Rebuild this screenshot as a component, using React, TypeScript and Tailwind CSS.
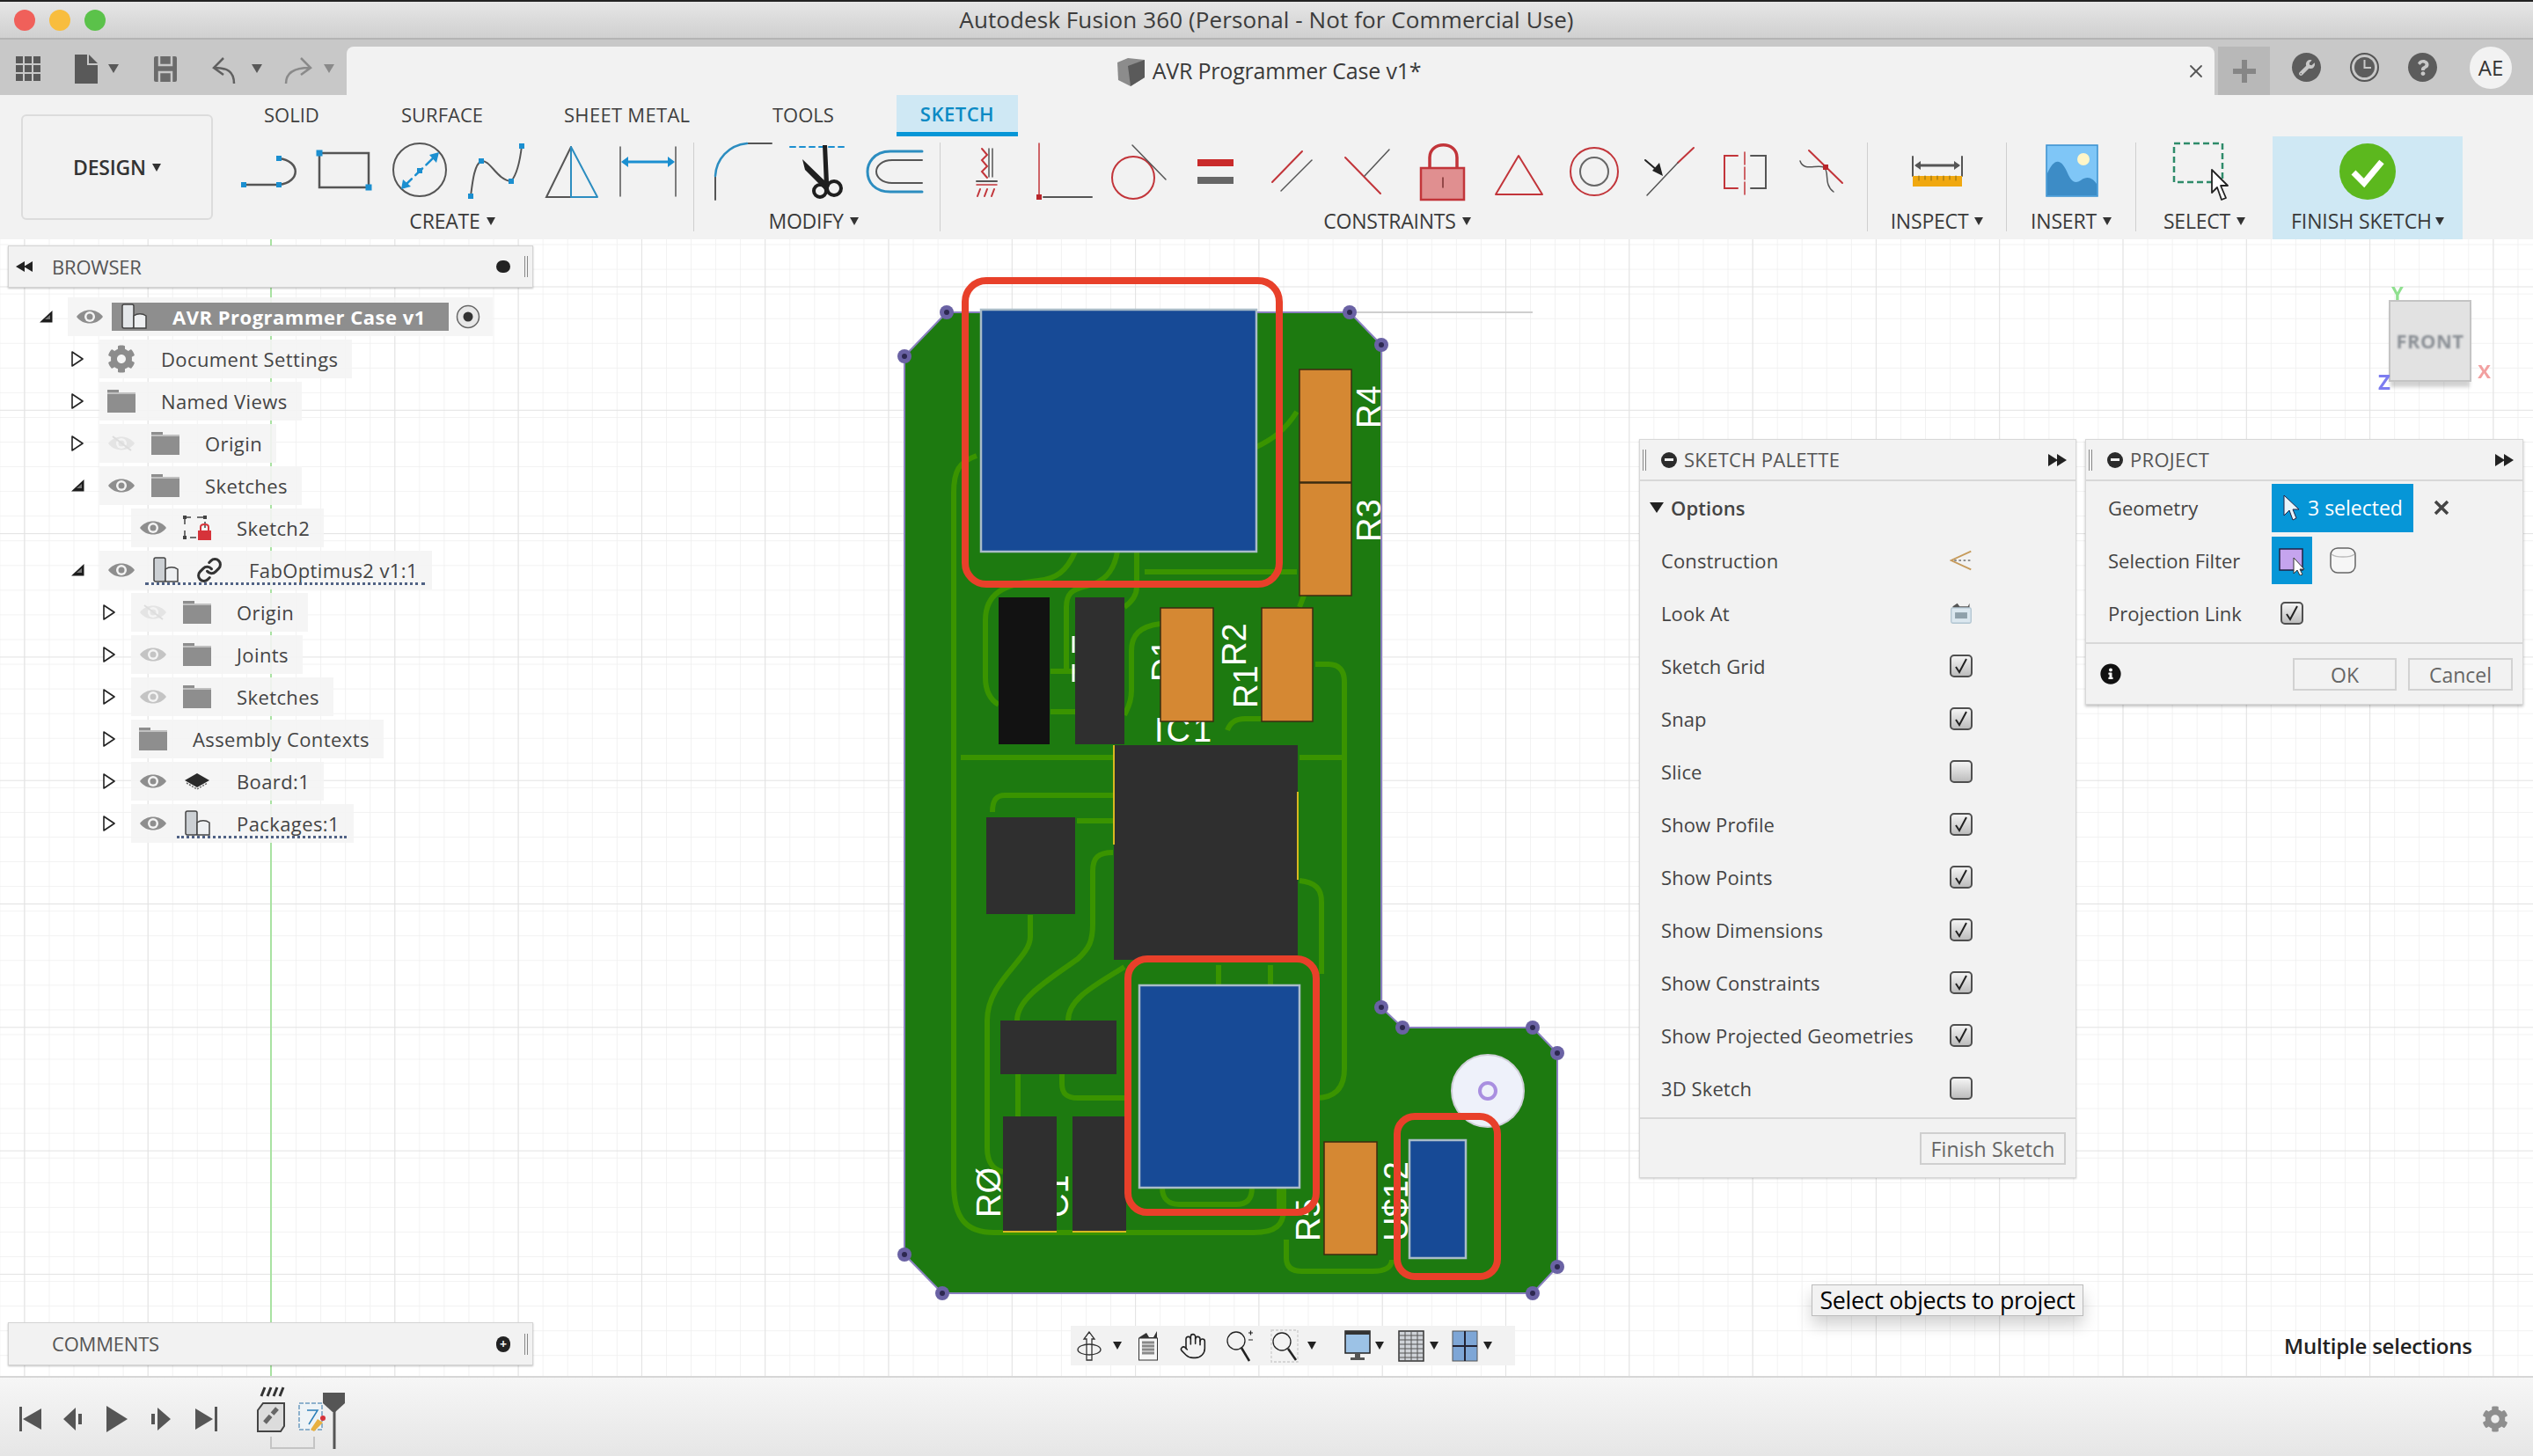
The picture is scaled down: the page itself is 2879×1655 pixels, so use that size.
import type { ReactNode } from 'react';
import { FaCog, FaInfoCircle, FaQuestion, FaWrench } from 'react-icons/fa';
import { Hand, Link, X } from 'lucide-react';

const INK = '#555555';
const BLUE = '#1b8fd0';
const RED = '#c2353a';

function Caret({ className = 'ml-[7px]', color = 'border-t-[#333333]' }: { className?: string; color?: string }) {
  return <span className={`inline-block h-0 w-0 border-x-[5px] border-t-[9px] border-x-transparent ${color} ${className}`} />;
}

function Cell({ w = 87, children }: { w?: number; children: ReactNode }) {
  return (
    <svg width={w} height={82} viewBox={`0 0 ${w} 82`} fill="none" strokeLinecap="round">
      {children}
    </svg>
  );
}

function Dot({ x, y, s = 8, c = BLUE }: { x: number; y: number; s?: number; c?: string }) {
  return <rect x={x - s / 2} y={y - s / 2} width={s} height={s} fill={c} />;
}

function Group({ label, width, shift = '', children }: { label: string; width: string; shift?: string; children: ReactNode }) {
  return (
    <div className={`flex flex-col items-center pt-[2px] ${width}`}>
      <div className="flex h-[82px]">{children}</div>
      <div className={`flex h-[24px] items-center text-[23px] tracking-[-0.2px] text-[#3a3a3a] ${shift}`}>
        {label}
        <Caret />
      </div>
    </div>
  );
}

function Divider({ className }: { className: string }) {
  return <div className={`mt-[7px] h-[101px] w-px bg-[#cfcfcf] ${className}`} />;
}

const createIcons = [
  <>
    <path d="M15 53H55M55 23C80 26 80 50 55 53" stroke={INK} strokeWidth="2.5" />
    <Dot x={15} y={53} s={6} /><Dot x={55} y={53} s={6} /><Dot x={55} y={23} s={6} />
  </>,
  <>
    <rect x="14" y="17" width="56" height="39" stroke={INK} strokeWidth="2.5" />
    <Dot x={14} y={17} s={7} /><Dot x={70} y={56} s={7} />
  </>,
  <>
    <circle cx="41" cy="36" r="30" stroke={INK} strokeWidth="2" />
    <path d="M24 54L59 20" stroke={BLUE} strokeWidth="2.5" strokeDasharray="11 6" />
    <Dot x={41} y={37} s={6} />
    <path d="M20 58L22 47L31 55ZM63 16L52 19L60 28Z" fill={BLUE} />
  </>,
  <>
    <path d="M12 66C14 50 16 30 24 26C34 24 42 48 58 49C64 42 68 26 70 9" stroke={INK} strokeWidth="2" />
    <Dot x={12} y={66} s={6} /><Dot x={24} y={26} s={6} /><Dot x={58} y={49} s={6} /><Dot x={70} y={9} s={6} />
  </>,
  <>
    <path d="M39 10L11 67H39" stroke={INK} strokeWidth="2" />
    <path d="M39 10V67H69Z" stroke="#2c8dc0" strokeWidth="2" strokeLinejoin="round" />
  </>,
  <>
    <path d="M8 10V66M71 10V66" stroke={INK} strokeWidth="1.5" />
    <path d="M12 27H67" stroke={BLUE} strokeWidth="3" />
    <path d="M9 27L17 21V33ZM70 27L62 21V33Z" fill={BLUE} />
  </>,
];

const modifyIcons = [
  <>
    <path d="M15 44V70M51 6H79" stroke={INK} strokeWidth="2" />
    <path d="M15 43C16 24 30 8 51 6" stroke="#2c8dc0" strokeWidth="2.5" />
  </>,
  <>
    <path d="M13 10H76" stroke={BLUE} strokeWidth="2" strokeDasharray="6 5" />
    <path d="M50 8L55 8L57 50L52 56ZM27 24L58 54L54 60L30 36Z" fill="#1f1f1f" />
    <circle cx="47" cy="60" r="7" stroke="#1f1f1f" strokeWidth="4" />
    <circle cx="63" cy="57" r="8" stroke="#1f1f1f" strokeWidth="4" />
  </>,
  <>
    <path d="M76 15H40C20 15 14 30 14 38C14 50 22 61 40 61H76" stroke="#2c8dc0" strokeWidth="3" />
    <path d="M76 25H42C30 25 24 32 24 38C24 44 30 51 42 51H76" stroke={INK} strokeWidth="2" />
  </>,
];

const constraintIcons = [
  <>
    <path d="M44 12V44M48 12V44" stroke={INK} strokeWidth="1.5" />
    <path d="M36 12L42 19L36 25L42 32L36 38L42 45" stroke={RED} strokeWidth="2" />
    <path d="M30 49H53" stroke={INK} strokeWidth="2" />
    <path d="M30 53H53" stroke={RED} strokeWidth="1.5" />
    <path d="M34 58L31 66M42 58L39 66M50 58L47 66" stroke={RED} strokeWidth="2" />
  </>,
  <>
    <path d="M15 6V66" stroke={RED} strokeWidth="1.5" />
    <path d="M20 67H75" stroke={INK} strokeWidth="2" />
    <Dot x={15} y={67} s={6} c="#b8262b" />
  </>,
  <>
    <circle cx="36" cy="45" r="24" stroke={RED} strokeWidth="2" />
    <path d="M35 8L73 47" stroke={INK} strokeWidth="1.5" />
  </>,
  <>
    <rect x="23" y="24" width="41" height="8" fill="#c92a2a" />
    <rect x="23" y="44" width="41" height="8" fill="#666666" />
  </>,
  <>
    <path d="M56 15L22 50" stroke={RED} strokeWidth="2" />
    <path d="M67 25L32 60" stroke={INK} strokeWidth="1.5" />
  </>,
  <>
    <path d="M19 22L59 63" stroke={RED} strokeWidth="2" />
    <path d="M69 13L41 43" stroke={INK} strokeWidth="1.5" />
  </>,
  <>
    <path d="M29 34V22C29 3 60 3 60 22V34" stroke="#c2353a" strokeWidth="3.5" />
    <rect x="19" y="34" width="49" height="36" fill="#e08f90" stroke="#c2353a" strokeWidth="2.5" />
    <path d="M44 45V56" stroke="#7a3030" strokeWidth="1.5" />
  </>,
  <path d="M44 20L18 64H71Z" stroke={RED} strokeWidth="2" strokeLinejoin="round" />,
  <>
    <circle cx="44" cy="38" r="27" stroke={RED} strokeWidth="2" />
    <circle cx="44" cy="38" r="16" stroke="#666666" strokeWidth="2" />
  </>,
  <>
    <path d="M71 11L53 28" stroke={RED} strokeWidth="2" />
    <path d="M53 28L18 65" stroke={INK} strokeWidth="1.5" />
    <path d="M16 25L30 37" stroke="#222222" strokeWidth="2" />
    <path d="M36 43L24 37L32 28Z" fill="#222222" />
  </>,
  <>
    <path d="M43 16V66" stroke={RED} strokeWidth="1.5" strokeDasharray="14 3" />
    <path d="M35 20H20V57H35" stroke={RED} strokeWidth="2" />
    <path d="M50 20H67V57H50" stroke={INK} strokeWidth="2" />
  </>,
  <>
    <path d="M30 14L68 51" stroke={RED} strokeWidth="2" />
    <path d="M20 26C24 38 38 30 47 33C54 38 46 52 58 61" stroke={INK} strokeWidth="1.5" />
    <Dot x={49} y={33} s={6} c="#b8262b" />
  </>,
];

function Toolbar() {
  return (
    <div className="flex h-[164px] bg-[#f2f2f2]">
      <div className="ml-[24px] mt-[22px] flex h-[120px] w-[218px] items-center justify-center rounded-[6px] border-2 border-[#dcdcdc] text-[23px] font-semibold tracking-[-0.2px] text-[#333333]">
        DESIGN
        <Caret />
      </div>
      <div className="ml-[20px] flex flex-1 flex-col">
        <div className="relative flex h-[47px] items-center text-[22px] text-[#3f3f3f]">
          <span className="absolute left-[38px] top-[6px]">SOLID</span>
          <span className="absolute left-[194px] top-[6px]">SURFACE</span>
          <span className="absolute left-[379px] top-[6px] tracking-[0.3px]">SHEET METAL</span>
          <span className="absolute left-[616px] top-[6px]">TOOLS</span>
          <span className="absolute left-[757px] top-0 flex h-[47px] w-[138px] items-center justify-center border-b-[5px] border-[#0696d7] bg-[#cfe8f4] font-semibold tracking-[0.5px] text-[#0b8ac4]">
            SKETCH
          </span>
        </div>
        <div className="flex flex-1">
          <Group label="CREATE" width="w-[522px]" shift="mr-[18px]">
            {createIcons.map((icon, i) => <Cell key={i}>{icon}</Cell>)}
          </Group>
          <Divider className="ml-[4px]" />
          <Group label="MODIFY" width="ml-[9px] w-[261px]" shift="mr-[8px]">
            {modifyIcons.map((icon, i) => <Cell key={i}>{icon}</Cell>)}
          </Group>
          <Divider className="ml-[9px]" />
          <Group label="CONSTRAINTS" width="ml-[11px] w-[1032px]" shift="mr-[16px]">
            {constraintIcons.map((icon, i) => <Cell key={i} w={86}>{icon}</Cell>)}
          </Group>
          <Divider className="ml-[10px]" />
          <Group label="INSPECT" width="w-[157px]">
            <Cell w={157}>
              <path d="M51 21V43M107 21V43" stroke={INK} strokeWidth="2" />
              <path d="M56 31H102" stroke={INK} strokeWidth="3" />
              <path d="M53 31L60 26V36ZM105 31L98 26V36Z" fill={INK} />
              <rect x="51" y="43" width="56" height="12" fill="#f0a810" />
              <path d="M58 43V48M65 43V47M72 43V48M79 43V47M86 43V48M93 43V47M100 43V48" stroke="#8a6a10" strokeWidth="1" />
            </Cell>
          </Group>
          <Divider className="" />
          <Group label="INSERT" width="w-[146px]">
            <Cell w={146}>
              <rect x="45" y="8" width="58" height="58" fill="#7fc6f7" stroke="#3a90d0" strokeWidth="1.5" />
              <path d="M46 65V40C54 22 62 22 70 42C74 50 78 52 84 48C92 42 98 46 102 52V65Z" fill="#3d8cc6" />
              <ellipse cx="87" cy="24" rx="7" ry="7" fill="#fff6c8" />
            </Cell>
          </Group>
          <Divider className="" />
          <Group label="SELECT" width="w-[155px]">
            <Cell w={155}>
              <rect x="43" y="6" width="55" height="44" stroke="#2e8b6a" strokeWidth="2.5" strokeDasharray="7 4" strokeLinecap="butt" />
              <path d="M86 36V62L92 56L97 70L102 68L96 54H104Z" fill="#ffffff" stroke="#222222" strokeWidth="1.8" strokeLinejoin="round" />
            </Cell>
          </Group>
          <div className="flex w-[216px] flex-col items-center bg-[#cfe8f4] pt-[2px]">
            <div className="flex h-[82px] items-start">
              <svg width="66" height="66" viewBox="0 0 66 66" className="mt-[5px]">
                <circle cx="33" cy="33" r="32" fill="#5cb81e" />
                <path d="M17 34L29 46L49 22" stroke="#ffffff" strokeWidth="7" fill="none" />
              </svg>
            </div>
            <div className="flex h-[24px] items-center text-[23px] tracking-[-0.1px] text-[#3a3a3a]">
              FINISH SKETCH
              <Caret className="ml-[4px]" />
            </div>
          </div>
        </div>
      </div>
    </div>
  );
}

function TitleBar() {
  return (
    <div className="relative flex h-[45px] items-center justify-center border-t-2 border-b-2 border-t-[#222222] border-b-[#b4b4b4] bg-gradient-to-b from-[#e6e6e6] to-[#d0d0d0] text-[26px] tracking-[0.1px] text-[#3c3c3c]">
      <div className="absolute left-[16px] flex gap-[16px]">
        <span className="size-[24px] rounded-full bg-[#f0605a]" />
        <span className="size-[24px] rounded-full bg-[#f8bd3e]" />
        <span className="size-[24px] rounded-full bg-[#5bc24a]" />
      </div>
      Autodesk Fusion 360 (Personal - Not for Commercial Use)
    </div>
  );
}

function TabRow() {
  return (
    <div className="flex h-[63px] bg-[#c8c8c8]">
      <div className="flex w-[394px] items-start pt-[16px]">
        <svg width="394" height="36" viewBox="0 0 394 36" fill="none">
          <g fill="#595959">
            {[0, 10, 20].map((x) =>
              [0, 10, 20].map((y) => <rect key={`${x}-${y}`} x={18 + x} y={3 + y} width="8" height="8" />)
            )}
          </g>
          <path d="M85 1H101L111 11V34H85Z" fill="#595959" />
          <path d="M100 1V12H111" stroke="#c8c8c8" strokeWidth="2" />
          <path d="M123 12H135L129 22Z" fill="#595959" />
          <rect x="175" y="3" width="26" height="29" rx="2" fill="#6b6b6b" />
          <path d="M181 3V13H195V3" stroke="#c8c8c8" strokeWidth="2.5" />
          <path d="M181 32V21H195V32" stroke="#c8c8c8" strokeWidth="2.5" />
          <path d="M254 5L243 16L254 24M244 16C258 16 266 20 266 34" stroke="#606060" strokeWidth="2.5" />
          <path d="M286 12H298L292 22Z" fill="#595959" />
          <path d="M342 5L353 16L342 24M352 16C338 16 325 20 325 34" stroke="#8a8a8a" strokeWidth="2.5" />
          <path d="M368 12H380L374 22Z" fill="#8a8a8a" />
        </svg>
      </div>
      <div className="mt-[8px] flex w-[2123px] items-center justify-center rounded-t-[8px] bg-[#f2f2f2] pr-[28px]">
        <svg width="34" height="34" viewBox="0 0 34 34" className="mr-[8px]">
          <path d="M2 7L14 2L33 4V24L17 34L3 27Z" fill="#8c8c8c" />
          <path d="M14 11L33 4V24L17 34Z" fill="#5a5a5a" />
        </svg>
        <span className="text-[25px] tracking-[-0.2px] text-[#3a3a3a]">AVR Programmer Case v1*</span>
        <X className="absolute left-[2484px] top-[69px] text-[#555555]" size={24} strokeWidth={1.8} />
      </div>
      <div className="ml-[4px] mt-[8px] flex h-[55px] w-[59px] items-center justify-center bg-[#b8b8b8]">
        <svg width="26" height="26" viewBox="0 0 26 26"><path d="M10 0H16V10H26V16H16V26H10V16H0V10H10Z" fill="#868686" /></svg>
      </div>
      <div className="flex h-[63px] flex-1 items-center pl-[25px]">
        <span className="flex size-[33px] items-center justify-center rounded-full bg-[#5c5c5c] text-[#c8c8c8]"><FaWrench size={18} /></span>
        <svg width="33" height="33" viewBox="0 0 33 33" className="ml-[33px]">
          <circle cx="16.5" cy="16.5" r="15.5" fill="none" stroke="#555555" strokeWidth="2" />
          <circle cx="16.5" cy="16.5" r="11.5" fill="#5c5c5c" />
          <path d="M16.5 8V17H24" stroke="#c8c8c8" strokeWidth="2" fill="none" />
        </svg>
        <span className="ml-[33px] flex size-[33px] items-center justify-center rounded-full bg-[#5c5c5c] text-[#c8c8c8]"><FaQuestion size={18} /></span>
        <span className="ml-[37px] flex size-[48px] items-center justify-center rounded-full bg-[#f2f2f2] text-[24px] text-[#333333]">AE</span>
      </div>
    </div>
  );
}

function CanvasDrawing() {
  const traces = [
    'M1110 518C1090 525 1084 535 1084 560V1345C1084 1385 1098 1401 1130 1401H1425C1450 1401 1459 1392 1459 1375V1350',
    'M1222 627C1212 650 1200 658 1180 660C1140 664 1120 675 1120 705V770C1120 785 1125 795 1135 801',
    'M1270 627C1266 650 1255 662 1235 666C1218 670 1212 675 1212 690V763M1194 763H1222M1194 809H1224',
    'M1292 627V667C1292 678 1285 685 1278 690M1301 650H1474M1474 468C1460 490 1445 500 1428 508',
    'M1319 709C1295 712 1286 722 1286 740V785C1286 800 1280 808 1278 813M1395 830C1398 822 1403 817 1415 817H1434',
    'M1495 755H1510C1522 755 1528 762 1528 775V1215C1528 1238 1516 1248 1496 1248',
    'M1092 861H1265M1477 861H1528M1128 923C1128 910 1132 904 1142 904H1265M1224 933H1265',
    'M1265 969C1248 969 1242 975 1242 990V1050C1242 1070 1238 1078 1225 1090C1190 1115 1156 1135 1156 1160',
    'M1171 1040V1065C1171 1090 1122 1115 1122 1160V1305C1122 1322 1130 1330 1140 1332',
    'M1278 1099C1245 1120 1214 1135 1214 1160M1477 1001C1495 1003 1502 1010 1502 1025V1107',
    'M1385 1097V1120M1444 1097V1120M1207 1221V1232C1207 1243 1212 1248 1225 1248H1286M1157 1221V1269',
    'M1321 1350C1321 1362 1328 1369 1340 1369H1405C1418 1369 1423 1362 1423 1350M1454 1350V1382',
    'M1462 1409V1430C1462 1440 1468 1445 1480 1445H1560C1575 1445 1582 1440 1582 1432M1482 677L1477 690',
  ];
  const vertices = [
    [1076, 355], [1028, 405], [1534, 355], [1570, 392], [1570, 1145], [1594, 1168],
    [1742, 1168], [1770, 1197], [1770, 1440], [1742, 1470], [1071, 1470], [1028, 1426],
  ];
  const rotated = [
    { t: 'R4', x: 1569, y: 487, s: 38 },
    { t: 'R3', x: 1569, y: 616, s: 38 },
    { t: 'R2', x: 1416, y: 757, s: 38 },
    { t: 'R1', x: 1429, y: 805, s: 38 },
    { t: 'D1', x: 1336, y: 775, s: 38 },
    { t: 'RØ', x: 1137, y: 1384, s: 38 },
    { t: 'C1', x: 1214, y: 1384, s: 38 },
    { t: 'R5', x: 1500, y: 1411, s: 38 },
    { t: 'U$12', x: 1600, y: 1411, s: 38 },
  ];
  const orange = [
    [1477, 420, 59, 128], [1477, 549, 59, 128], [1319, 691, 60, 129], [1434, 691, 58, 129], [1505, 1298, 60, 128],
  ];
  const dark = [
    [1222, 679, 56, 167, '#2f2f2f'], [1135, 679, 58, 167, '#121212'], [1266, 847, 209, 244, '#2f2f2f'],
    [1121, 929, 101, 110, '#2f2f2f'], [1137, 1160, 132, 61, '#2f2f2f'], [1140, 1269, 61, 130, '#2f2f2f'], [1219, 1269, 61, 130, '#2f2f2f'],
  ] as const;
  const blue = [[1115, 352, 313, 275], [1295, 1120, 182, 230], [1602, 1296, 64, 134]];

  return (
    <svg className="absolute inset-0 bg-white" width="2879" height="1292" viewBox="0 272 2879 1292" fill="none">
      <defs>
        <pattern id="minor" x="308" y="25" width="28.06" height="28.06" patternUnits="userSpaceOnUse">
          <path d="M0 0V28.06M0 0H28.06" stroke="#eeeeee" strokeWidth="1.5" />
        </pattern>
        <pattern id="major" x="308" y="325.5" width="140.3" height="140.3" patternUnits="userSpaceOnUse">
          <path d="M0 0V140.3M0 0H140.3" stroke="#e2e2e2" strokeWidth="2" />
        </pattern>
      </defs>
      <rect x="0" y="272" width="2879" height="1292" fill="url(#minor)" />
      <rect x="0" y="272" width="2879" height="1292" fill="url(#major)" />
      <path d="M308 272V1564" stroke="#a9e2a2" strokeWidth="2" />
      <path d="M1534 355H1742" stroke="#cfcfcf" strokeWidth="2" />

      <path
        d="M1076 355H1534L1570 392V1145L1594 1168H1742L1770 1197V1440L1742 1470H1071L1028 1426V405Z"
        fill="#1d7a10"
        stroke="#8a80c0"
        strokeWidth="2"
      />
      {traces.map((d, i) => (
        <path key={i} d={d} stroke="#3a9400" strokeWidth="6" />
      ))}
      {vertices.map(([x, y]) => (
        <g key={`${x}-${y}`}>
          <circle cx={x} cy={y} r="8" fill="#6a62a4" />
          <circle cx={x} cy={y} r="3" fill="#2d2850" />
        </g>
      ))}
      <circle cx="1691" cy="1240" r="41" fill="#eef1fa" stroke="#cfcfd8" strokeWidth="2" />
      <circle cx="1691" cy="1240" r="9" stroke="#a98fe0" strokeWidth="4" />

      {rotated.map((l) => (
        <text
          key={l.t}
          transform={`translate(${l.x} ${l.y}) rotate(-90)`}
          fontFamily="Liberation Sans, sans-serif"
          fontSize={l.s}
          fill="#ffffff"
        >
          {l.t}
        </text>
      ))}
      <text x="1312" y="843" fontFamily="Liberation Sans, sans-serif" fontSize="38" letterSpacing="3" fill="#ffffff">IC1</text>
      <path d="M1220 723V742M1220 755V775" stroke="#ffffff" strokeWidth="3" />

      {orange.map(([x, y, w, h]) => (
        <rect key={`${x}-${y}`} x={x} y={y} width={w} height={h} fill="#d58833" stroke="#3d2a10" strokeWidth="1.5" />
      ))}
      {dark.map(([x, y, w, h, c]) => (
        <rect key={`${x}-${y}`} x={x} y={y} width={w} height={h} fill={c} />
      ))}
      <path d="M1140 1400H1201M1219 1400H1280M1266 960V847M1475 900V1000" stroke="#d8b820" strokeWidth="2" />
      {blue.map(([x, y, w, h]) => (
        <rect key={`${x}-${y}`} x={x} y={y} width={w} height={h} fill="#174a96" stroke="#a9bcc8" strokeWidth="2.5" />
      ))}

      <rect x="1097" y="319" width="357" height="345" rx="24" stroke="#e8402a" strokeWidth="8" />
      <rect x="1282" y="1090" width="214" height="288" rx="22" stroke="#e8402a" strokeWidth="8" />
      <rect x="1588" y="1269" width="114" height="182" rx="20" stroke="#e8402a" strokeWidth="8" />
    </svg>
  );
}

function Eye({ mode = 'on' }: { mode?: 'on' | 'dim' | 'off' }) {
  const color = mode === 'on' ? '#8e8e8e' : mode === 'dim' ? '#c4c4c4' : '#e4e4e4';
  return (
    <svg width="32" height="20" viewBox="0 0 32 20" fill="none">
      <path d="M1 10C8 0 24 0 31 10C24 20 8 20 1 10Z" fill={color} />
      <circle cx="16" cy="10" r="6" fill="#f4f4f4" />
      <circle cx="16" cy="10" r="3.5" fill={color} />
      {mode === 'off' && <path d="M6 2L27 18" stroke="#dddddd" strokeWidth="2" />}
    </svg>
  );
}

function Folder() {
  return (
    <svg width="32" height="26" viewBox="0 0 32 26">
      <path d="M0 0H13V3H32V26H0Z" fill="#8e8e8e" />
      <path d="M0 4H32" stroke="#f2f2f2" strokeWidth="1" />
    </svg>
  );
}

function Component({ light = true }: { light?: boolean }) {
  return (
    <svg width="32" height="30" viewBox="0 0 32 30" fill="none">
      <rect x="3" y="1" width="13" height="27" rx="2" fill={light ? '#e4e7ea' : '#ccd0d4'} stroke="#444444" strokeWidth="1.5" />
      <path d="M16 14C20 11 26 11 30 14V28H16Z" fill="#eef0f2" stroke="#444444" strokeWidth="1.5" />
    </svg>
  );
}

function Chevron({ open }: { open?: boolean }) {
  if (open) {
    return (
      <svg width="15" height="14" viewBox="0 0 15 14">
        <path d="M0 13.5L14.5 0V13.5Z" fill="#1c1c1c" />
        <path d="M6 10L12 5V10Z" fill="#777777" />
      </svg>
    );
  }
  return (
    <svg width="14" height="18" viewBox="0 0 14 18" fill="none">
      <path d="M1 1L13 9L1 17Z" fill="#ffffff" stroke="#222222" strokeWidth="1.6" strokeLinejoin="round" />
    </svg>
  );
}

function IconSlot({ children }: { children?: ReactNode }) {
  return <span className="flex w-[50px] shrink-0 items-center justify-center">{children}</span>;
}

function Wavy({ className }: { className: string }) {
  return <span className={`absolute bottom-[5px] h-[4px] border-b-[3px] border-dotted border-[#4f6184] ${className}`} />;
}

type TreeRowProps = {
  pad: string;
  open?: boolean;
  chevron?: boolean;
  icons: ReactNode[];
  label: string;
  wavy?: string;
};

function TreeRow({ pad, open, chevron = true, icons, label, wavy }: TreeRowProps) {
  return (
    <div className={`flex h-[48px] items-center ${pad}`}>
      <IconSlot>{chevron && <Chevron open={open} />}</IconSlot>
      <div className="relative flex h-[44px] items-center bg-[#f4f4f4]/90 pr-[16px]">
        {icons.map((icon, i) => (
          <IconSlot key={i}>{icon}</IconSlot>
        ))}
        <span className="ml-[20px] text-[22px] tracking-[0.4px] text-[#444444]">{label}</span>
        {wavy && <Wavy className={wavy} />}
      </div>
    </div>
  );
}

function BrowserPanel() {
  return (
    <div className="absolute left-[9px] top-[7px] w-[597px]">
      <div className="flex h-[48px] items-center border border-[#d4d4d4] bg-[#f2f2f2] pl-[8px] pr-[5px] shadow-[0_1px_2px_rgba(0,0,0,0.25)]">
        <svg width="20" height="12" viewBox="0 0 20 12"><path d="M0 6L10 0V12ZM9 6L19 0V12Z" fill="#222222" /></svg>
        <span className="ml-[21px] text-[22px] tracking-[-0.2px] text-[#555555]">BROWSER</span>
        <span className="ml-auto mr-[16px] h-[14px] w-[16px] rounded-full bg-[#222222]" />
        <span className="h-[24px] w-[4px] border-x border-[#888888]" />
      </div>
      <div className="mt-[9px]">
        <div className="flex h-[48px] items-center pl-[18px]">
          <IconSlot><Chevron open /></IconSlot>
          <div className="flex h-[44px] w-[483px] items-center bg-[#f4f4f4]/90">
            <IconSlot><Eye /></IconSlot>
            <div className="flex h-[32px] w-[383px] items-center bg-[#8e8e8e]">
              <span className="flex w-[50px] justify-center"><Component /></span>
              <span className="ml-[19px] text-[22px] font-bold tracking-[0.5px] text-white">AVR Programmer Case v1</span>
            </div>
            <svg width="28" height="28" viewBox="0 0 28 28" className="ml-[8px]">
              <circle cx="14" cy="14" r="12.5" fill="#e8e8e8" stroke="#666666" strokeWidth="1.5" />
              <circle cx="14" cy="14" r="5.5" fill="#333333" />
            </svg>
          </div>
        </div>
        <TreeRow pad="pl-[54px]" icons={[<FaCog size={32} color="#8c8c8c" />]} label="Document Settings" />
        <TreeRow pad="pl-[54px]" icons={[<Folder />]} label="Named Views" />
        <TreeRow pad="pl-[54px]" icons={[<Eye mode="off" />, <Folder />]} label="Origin" />
        <TreeRow pad="pl-[54px]" open icons={[<Eye />, <Folder />]} label="Sketches" />
        <TreeRow
          pad="pl-[90px]"
          chevron={false}
          icons={[
            <Eye />,
            <svg width="34" height="30" viewBox="0 0 34 30" fill="none">
              <path d="M3 3H26V26H3Z" stroke="#444444" strokeWidth="1.5" strokeDasharray="7 7" />
              <path d="M1 1H5V5H1ZM24 1H28V5H24ZM1 24H5V28H1Z" fill="#444444" />
              <rect x="18" y="18" width="15" height="11" fill="#d6333a" />
              <path d="M21 18V14C21 10 30 10 30 14V18" stroke="#d6333a" strokeWidth="2" />
            </svg>,
          ]}
          label="Sketch2"
        />
        <TreeRow
          pad="pl-[54px]"
          open
          icons={[<Eye />, <Component light={false} />, <Link size={30} strokeWidth={2.4} color="#333333" />]}
          label="FabOptimus2 v1:1"
          wavy="left-[52px] right-[8px]"
        />
        <TreeRow pad="pl-[90px]" icons={[<Eye mode="off" />, <Folder />]} label="Origin" />
        <TreeRow pad="pl-[90px]" icons={[<Eye mode="dim" />, <Folder />]} label="Joints" />
        <TreeRow pad="pl-[90px]" icons={[<Eye mode="dim" />, <Folder />]} label="Sketches" />
        <TreeRow pad="pl-[90px]" icons={[<Folder />]} label="Assembly Contexts" />
        <TreeRow
          pad="pl-[90px]"
          icons={[
            <Eye />,
            <svg width="30" height="20" viewBox="0 0 30 20">
              <path d="M15 1L29 9L15 17L1 9Z" fill="#2a2a2a" />
              <path d="M3 12L15 19L27 12" stroke="#666666" strokeWidth="1.5" fill="none" strokeDasharray="2 1.5" />
            </svg>,
          ]}
          label="Board:1"
        />
        <TreeRow pad="pl-[90px]" icons={[<Eye />, <Component light={false} />]} label="Packages:1" wavy="left-[52px] right-[8px]" />
      </div>
    </div>
  );
}

function Check({ on }: { on: boolean }) {
  return (
    <span className="flex size-[26px] items-center justify-center rounded-[5px] border-2 border-[#4f4f4f] bg-gradient-to-b from-[#f4f4f4] to-[#bdbdbd]">
      {on && (
        <svg width="16" height="18" viewBox="0 0 16 18" fill="none">
          <path d="M2 10L6 16L14 1" stroke="#222222" strokeWidth="2" />
        </svg>
      )}
    </span>
  );
}

function PanelHeader({ title }: { title: string }) {
  return (
    <div className="flex h-[47px] items-center border-b-2 border-[#d8d8d8] pl-[3px] pr-[9px]">
      <span className="h-[24px] w-[4px] border-x border-[#888888]" />
      <span className="ml-[17px] flex size-[18px] items-center justify-center rounded-full bg-[#2b2b2b]">
        <span className="h-[3px] w-[10px] bg-[#f2f2f2]" />
      </span>
      <span className="ml-[8px] text-[22px] tracking-[0.3px] text-[#555555]">{title}</span>
      <svg width="22" height="14" viewBox="0 0 22 14" className="ml-auto"><path d="M0 0L11 7L0 14ZM10 0L21 7L10 14Z" fill="#222222" /></svg>
    </div>
  );
}

const paletteRows: { label: string; on?: boolean; icon?: ReactNode }[] = [
  {
    label: 'Construction',
    icon: (
      <svg width="30" height="30" viewBox="0 0 30 30" fill="none">
        <path d="M28 3L2 15L28 27" stroke="#c69a5a" strokeWidth="2" />
        <path d="M6 15H28" stroke="#6f6f6f" strokeWidth="2" strokeDasharray="3 3" />
      </svg>
    ),
  },
  {
    label: 'Look At',
    icon: (
      <svg width="30" height="30" viewBox="0 0 30 30" fill="none">
        <path d="M4 6L10 2L13 6H24L26 2V8H4Z" fill="#555555" />
        <rect x="2" y="8" width="26" height="20" rx="2" fill="#dbe7ef" stroke="#b0c4d0" strokeWidth="1.5" />
        <rect x="7" y="14" width="16" height="8" fill="#8fa0aa" />
      </svg>
    ),
  },
  { label: 'Sketch Grid', on: true },
  { label: 'Snap', on: true },
  { label: 'Slice', on: false },
  { label: 'Show Profile', on: true },
  { label: 'Show Points', on: true },
  { label: 'Show Dimensions', on: true },
  { label: 'Show Constraints', on: true },
  { label: 'Show Projected Geometries', on: true },
  { label: '3D Sketch', on: false },
];

function SketchPalette() {
  return (
    <div className="absolute left-[1863px] top-[227px] w-[497px] border border-[#d8d8d8] bg-[#f2f2f2] text-[22px] tracking-[0.1px] text-[#444444] shadow-[0_1px_2px_rgba(0,0,0,0.2)]">
      <PanelHeader title="SKETCH PALETTE" />
      <div className="flex h-[60px] items-center pl-[11px]">
        <span className="h-0 w-0 border-x-[8px] border-t-[12px] border-x-transparent border-t-[#222222]" />
        <span className="ml-[8px] font-semibold">Options</span>
      </div>
      {paletteRows.map((r) => (
        <div key={r.label} className="flex h-[60px] items-center pl-[24px]">
          <span className="w-[328px]">{r.label}</span>
          <span className="flex w-[26px] justify-center">{r.icon ?? <Check on={!!r.on} />}</span>
        </div>
      ))}
      <div className="mt-[3px] flex h-[68px] justify-end border-t-2 border-[#d8d8d8] pr-[11px] pt-[15px]">
        <button type="button" className="h-[37px] w-[166px] border-2 border-[#cfcfcf] text-[23px] text-[#666666]">Finish Sketch</button>
      </div>
    </div>
  );
}

function ProjectPanel() {
  return (
    <div className="absolute left-[2370px] top-[227px] w-[498px] border border-[#d8d8d8] bg-[#f2f2f2] text-[22px] text-[#444444] shadow-[0_2px_3px_rgba(0,0,0,0.25)]">
      <PanelHeader title="PROJECT" />
      <div className="flex h-[60px] items-center pl-[25px]">
        <span className="w-[186px]">Geometry</span>
        <span className="flex h-[55px] w-[161px] items-center bg-[#0696d7] pl-[13px] text-white">
          <svg width="18" height="30" viewBox="0 0 18 30"><path d="M1 1V24L7 18L11 29L15 27L11 17H18Z" fill="#e8f4fb" stroke="#224" strokeWidth="1" /></svg>
          <span className="ml-[10px] text-[23px]">3 selected</span>
        </span>
        <svg width="20" height="20" viewBox="0 0 20 20" className="ml-[22px]"><path d="M3 3L17 17M17 3L3 17" stroke="#444444" strokeWidth="3.5" /></svg>
      </div>
      <div className="flex h-[60px] items-center pl-[25px]">
        <span className="w-[186px]">Selection Filter</span>
        <span className="flex h-[54px] w-[46px] items-center justify-center bg-[#0696d7]">
          <svg width="30" height="34" viewBox="0 0 30 34">
            <rect x="1" y="4" width="26" height="24" fill="#c5a4ee" stroke="#222244" strokeWidth="1.5" />
            <path d="M17 14V32L21 28L24 34L27 33L24 27H29Z" fill="#ffffff" stroke="#333333" strokeWidth="1" />
          </svg>
        </span>
        <svg width="32" height="32" viewBox="0 0 32 32" className="ml-[19px]">
          <rect x="2" y="2" width="28" height="28" rx="8" fill="#f6f6f6" stroke="#666666" strokeWidth="1.5" />
          <path d="M3 9C8 13 24 13 29 9" stroke="#bbbbbb" strokeWidth="1.5" fill="none" />
        </svg>
      </div>
      <div className="flex h-[60px] items-center pl-[25px]">
        <span className="w-[196px]">Projection Link</span>
        <Check on />
      </div>
      <div className="mt-[3px] flex h-[70px] items-center border-t-2 border-[#d8d8d8] pl-[16px] pr-[11px]">
        <FaInfoCircle size={24} color="#111111" />
        <button type="button" className="ml-[195px] h-[37px] w-[118px] border-2 border-[#d2d2d2] text-[23px] text-[#666666]">OK</button>
        <button type="button" className="ml-[13px] h-[37px] w-[119px] border-2 border-[#d2d2d2] text-[23px] text-[#666666]">Cancel</button>
      </div>
    </div>
  );
}

function NavCaret({ className }: { className: string }) {
  return (
    <span className={`flex justify-center ${className}`}>
      <Caret className="" color="border-t-[#222222]" />
    </span>
  );
}

function NavBar() {
  return (
    <div className="absolute left-[1217px] top-[1235px] flex h-[45px] w-[505px] items-center bg-[#f2f2f2]">
      <span className="flex w-[42px] justify-center">
        <svg width="32" height="36" viewBox="0 0 32 36" fill="none" stroke="#333333" strokeWidth="1.3">
          <path d="M16 2L10 10H13V34H19V10H22Z" fill="#f6f6f6" />
          <ellipse cx="16" cy="22" rx="13" ry="6" />
        </svg>
      </span>
      <NavCaret className="w-[22px]" />
      <span className="flex w-[48px] justify-center">
        <svg width="24" height="36" viewBox="0 0 24 36" fill="none">
          <path d="M2 8L10 3L13 8H18L22 1V9H2Z" fill="#333333" />
          <rect x="1.5" y="9" width="21" height="25" fill="#f6f6f6" stroke="#333333" />
          <path d="M5 14H19M5 18H19M5 22H19M5 26H19" stroke="#888888" strokeWidth="3" />
        </svg>
      </span>
      <span className="flex w-[54px] justify-center"><Hand size={32} strokeWidth={1.2} color="#222222" /></span>
      <span className="flex w-[52px] justify-center">
        <svg width="32" height="38" viewBox="0 0 32 38" fill="none" stroke="#222222" strokeWidth="1.3">
          <circle cx="12" cy="13" r="10" />
          <path d="M18 21L27 36" strokeWidth="2.5" />
          <path d="M26 4H31M28.5 1.5V6.5M26 12H31" strokeWidth="1.2" />
        </svg>
      </span>
      <span className="flex w-[50px] justify-center">
        <svg width="32" height="38" viewBox="0 0 32 38" fill="none" stroke="#222222" strokeWidth="1.3">
          <rect x="1" y="1" width="30" height="36" stroke="#cccccc" strokeDasharray="3 2" />
          <circle cx="13" cy="14" r="10" />
          <path d="M20 22L29 35" strokeWidth="2.5" />
        </svg>
      </span>
      <NavCaret className="w-[12px]" />
      <span className="ml-[25px] flex w-[42px] justify-center">
        <svg width="30" height="36" viewBox="0 0 30 36">
          <rect x="1" y="1" width="28" height="25" fill="#9cc2e6" stroke="#222222" strokeWidth="1.5" />
          <rect x="1" y="1" width="28" height="4" fill="#333333" />
          <rect x="12" y="26" width="6" height="5" fill="#555555" />
          <rect x="7" y="31" width="16" height="3" fill="#555555" />
        </svg>
      </span>
      <NavCaret className="w-[8px]" />
      <span className="ml-[14px] flex w-[36px] justify-center">
        <svg width="30" height="36" viewBox="0 0 30 36">
          <rect x="1" y="1" width="28" height="34" fill="#cfd3d8" stroke="#333333" strokeWidth="1.5" />
          <path d="M1 6H29M1 11H29M1 16H29M1 21H29M1 26H29M1 31H29M8 1V35M15 1V35M22 1V35" stroke="#555555" strokeWidth="1" />
        </svg>
      </span>
      <NavCaret className="w-[16px]" />
      <span className="ml-[9px] flex w-[36px] justify-center">
        <svg width="30" height="36" viewBox="0 0 30 36">
          <rect x="1" y="1" width="28" height="34" fill="#7ea6d6" stroke="#555555" strokeWidth="1" />
          <path d="M15 1V35M1 18H29" stroke="#223" strokeWidth="2" />
        </svg>
      </span>
      <NavCaret className="w-[16px]" />
    </div>
  );
}

function ViewCube() {
  return (
    <div className="absolute left-[2700px] top-[44px]">
      <div className="relative ml-[15px] mt-[25px] flex h-[93px] w-[94px] items-center justify-center border-2 border-[#c4c4c4] bg-[#e2e2e2] shadow-[0_8px_4px_-2px_rgba(0,0,0,0.18)]">
        <span className="text-[22px] font-bold tracking-[0.5px] text-[#8b9096] blur-[0.8px]">FRONT</span>
        <span className="absolute -top-[27px] left-[1px] text-[22px] font-bold text-[#8fe08f] blur-[0.6px]">Y</span>
        <span className="absolute -bottom-[20px] -left-[14px] text-[24px] font-bold text-[#7d7df0] blur-[0.5px]">Z</span>
        <span className="absolute -right-[24px] bottom-[-6px] text-[22px] font-bold text-[#f2a0a0] blur-[0.6px]">X</span>
      </div>
    </div>
  );
}

function StatusBar() {
  return (
    <div className="flex h-[91px] items-center border-t-2 border-[#d6d6d6] bg-gradient-to-b from-[#f6f6f6] to-[#e6e6e6] pt-[5px]">
      <svg width="250" height="32" viewBox="0 0 250 32" className="ml-[9px]" fill="#555555">
        <path d="M13 2H16V30H13ZM38 4V28L17 16Z" />
        <path d="M77 3V29L63 16ZM80 10H84V22H80Z" />
        <path d="M112 1L136 16L112 31Z" />
        <path d="M163 10H167V22H163ZM170 3L185 16L170 29Z" />
        <path d="M213 4L233 16L213 28ZM235 2H238V30H235Z" />
      </svg>
      <svg width="130" height="80" viewBox="0 0 130 80" className="ml-[24px]" fill="none">
        <path d="M14 14L18 4M21 14L25 4M28 14L32 4M35 14L39 4" stroke="#333333" strokeWidth="3" />
        <path d="M16 22H40V48L36 54H10V30Z" fill="#dcdcdc" stroke="#444444" strokeWidth="2" />
        <path d="M18 44L32 28" stroke="#666666" strokeWidth="5" strokeDasharray="10 3" fill="none" />
        <rect x="57" y="22" width="26" height="30" fill="#eef3f6" stroke="#6d9cc0" strokeWidth="1.5" strokeDasharray="5 2" />
        <path d="M66 30H78L68 46" stroke="#2d7fb8" strokeWidth="1.5" />
        <path d="M78 40L84 44L74 54L70 52Z" fill="#e8b040" />
        <circle cx="84" cy="39" r="3" fill="#d6333a" />
        <path d="M25 60V73H74V60" stroke="#c4c4c4" strokeWidth="2" />
        <path d="M84 10H109V22L98 32H95L84 22Z" fill="#555555" />
        <path d="M97 30V74" stroke="#555555" strokeWidth="3" />
      </svg>
      <FaCog size={30} color="#8e8e8e" className="ml-auto mr-[28px]" />
    </div>
  );
}

export default function App() {
  return (
    <div className="flex h-[1655px] w-[2879px] flex-col overflow-hidden bg-white font-['Open_Sans',sans-serif]">
      <TitleBar />
      <TabRow />
      <Toolbar />
      <div className="relative flex-1 overflow-hidden">
        <CanvasDrawing />
        <BrowserPanel />
        <div className="absolute left-[9px] top-[1231px] flex h-[49px] w-[597px] items-center border border-[#d4d4d4] bg-[#f2f2f2] pl-[49px] pr-[5px] shadow-[0_1px_2px_rgba(0,0,0,0.25)]">
          <span className="text-[22px] tracking-[-0.2px] text-[#555555]">COMMENTS</span>
          <span className="ml-auto mr-[16px] flex h-[18px] w-[16px] items-center justify-center rounded-full bg-[#222222] text-[14px] font-bold leading-none text-[#f2f2f2]">+</span>
          <span className="h-[24px] w-[4px] border-x border-[#888888]" />
        </div>
        <ViewCube />
        <SketchPalette />
        <ProjectPanel />
        <NavBar />
        <div className="absolute left-[2059px] top-[1188px] flex h-[36px] w-[309px] items-center justify-center border border-[#bbbbbb] bg-[#f2f2f2] text-[26.8px] tracking-[-0.3px] text-black shadow-[0_10px_18px_rgba(0,0,0,0.18)]">
          Select objects to project
        </div>
        <span className="absolute left-[2596px] top-[1240px] text-[24px] font-semibold tracking-[-0.2px] text-[#222222]">Multiple selections</span>
      </div>
      <StatusBar />
    </div>
  );
}
